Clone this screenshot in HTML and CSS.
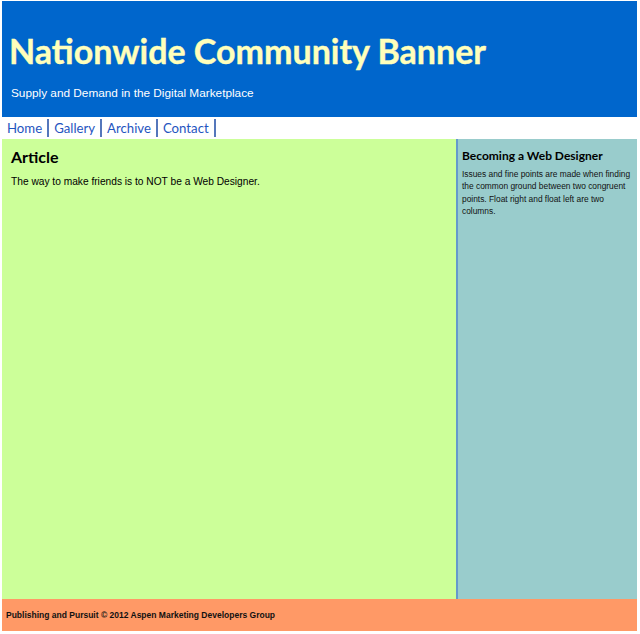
FILE: index.html
```html
<!DOCTYPE html>
<html>
<head>
<meta charset="utf-8">
<link rel="stylesheet" href="styles.css">
</head>
<body>
<div class="wrapper">
  <header class="banner">
    <h1 class="title">Nationwide Community Banner</h1>
    <p class="tagline">Supply and Demand in the Digital Marketplace</p>
  </header>
  <nav class="nav">
    <a class="nav-link" href="#">Home</a>
    <a class="nav-link" href="#">Gallery</a>
    <a class="nav-link" href="#">Archive</a>
    <a class="nav-link" href="#">Contact</a>
  </nav>
  <div class="content">
    <main class="article">
      <h2 class="article-title">Article</h2>
      <p class="article-text">The way to make friends is to NOT be a Web Designer.</p>
    </main>
    <aside class="sidebar">
      <h3 class="side-title">Becoming a Web Designer</h3>
      <p class="side-text">Issues and fine points are made when finding the common ground between two congruent points. Float right and float left are two columns.</p>
    </aside>
  </div>
  <footer class="footer">
    <p class="footer-text">Publishing and Pursuit © 2012 Aspen Marketing Developers Group</p>
  </footer>
</div>
</body>
</html>
```
FILE: styles.css
```css
html, body {
  margin: 0;
  padding: 0;
  background: #ffffff;
}
.wrapper {
  width: 635px;
  margin: 1px 0 0 2px;
}
.banner {
  background: #0066cc;
  height: 116px;
  box-sizing: border-box;
  padding: 32px 0 0 7px;
}
.title {
  margin: 0;
  font-family: Lato, "DejaVu Sans", sans-serif;
  font-weight: bold;
  font-size: 34px;
  line-height: 36px;
  color: #ffffbb;
  -webkit-text-stroke: 0.4px #ffffbb;
}
.tagline {
  margin: 17px 0 0 2px;
  font-family: "Liberation Sans", Arial, sans-serif;
  font-size: 11.8px;
  color: #ffffff;
}
.nav {
  display: flex;
  height: 22px;
  align-items: center;
  font-family: Lato, "DejaVu Sans", sans-serif;
  font-size: 13.2px;
}
.nav-link {
  color: #1f55c0;
  text-decoration: none;
  padding: 0 5px;
  border-right: 2px solid #5577bb;
  line-height: 18px;
}
.content {
  display: flex;
  height: 460px;
}
.article {
  flex: 1;
  background: #ccff99;
  padding: 8px 9px;
}
.article-title {
  margin: 0;
  font-family: Lato, "DejaVu Sans", sans-serif;
  font-weight: bold;
  font-size: 16px;
  line-height: 20px;
}
.article-text {
  margin: 9px 0 0;
  font-family: "Liberation Sans", Arial, sans-serif;
  font-size: 10.2px;
  color: #000;
}
.sidebar {
  width: 181px;
  box-sizing: border-box;
  background: #99cccc;
  border-left: 2px solid #6699cc;
  padding: 9px 4px 0 4px;
}
.side-title {
  margin: 0;
  font-family: Lato, "DejaVu Sans", sans-serif;
  font-weight: bold;
  font-size: 12px;
  line-height: 16px;
}
.side-text {
  margin: 4px 0 0;
  font-family: "Liberation Sans", Arial, sans-serif;
  font-size: 8.4px;
  line-height: 12.3px;
  color: #111;
}
.footer {
  background: #ff9966;
  height: 32px;
  display: flex;
  align-items: center;
  padding-left: 4px;
}
.footer-text {
  margin: 0;
  font-family: "Liberation Sans", Arial, sans-serif;
  font-weight: bold;
  font-size: 8.5px;
  color: #111;
}
```
